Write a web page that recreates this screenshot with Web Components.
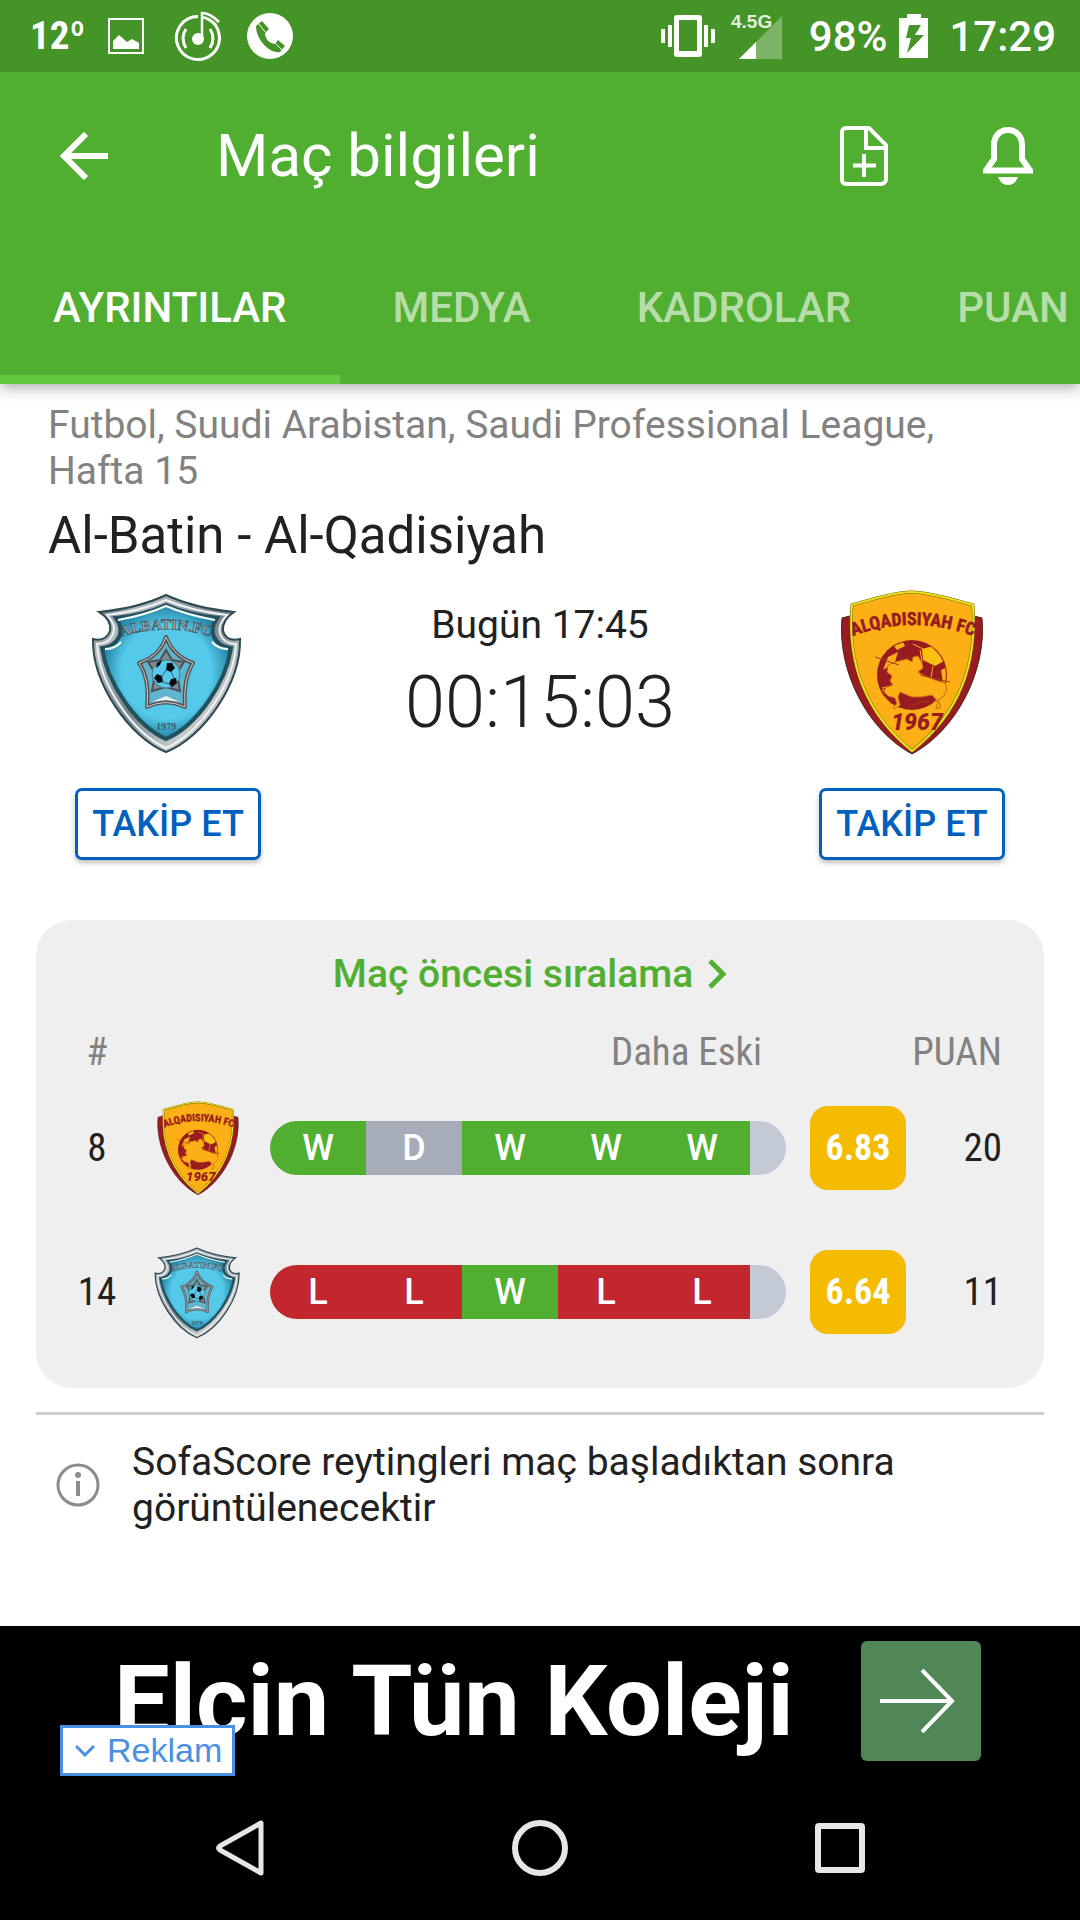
<!DOCTYPE html>
<html lang="tr">
<head>
<meta charset="utf-8">
<meta name="viewport" content="width=device-width, initial-scale=1">
<title>Maç bilgileri</title>
<style>
    body {
        margin: 0;
        background-color: white;
        color: #212121;
        font-family: Roboto, "Noto Sans", sans-serif;
        --green: #50ae30;
        --grey: #828282;
        --condensed: "Roboto Condensed", Roboto, sans-serif;
    }
</style>
</head>
<body>
<match-page>
    <status-bar slot="top" temperature="12º" battery="98%" clock="17:29"></status-bar>
    <app-toolbar slot="top">Maç bilgileri</app-toolbar>
    <tab-bar slot="top" tabs="AYRINTILAR,MEDYA,KADROLAR,PUAN"></tab-bar>

    <match-header>
        <span slot="league">Futbol, Suudi Arabistan, Saudi Professional League, Hafta 15</span>
        <span slot="name">Al-Batin - Al-Qadisiyah</span>
        <team-crest slot="home" team="batin"></team-crest>
        <follow-button slot="home">TAKİP ET</follow-button>
        <span slot="date">Bugün 17:45</span>
        <span slot="countdown">00:15:03</span>
        <team-crest slot="away" team="qadisiyah"></team-crest>
        <follow-button slot="away">TAKİP ET</follow-button>
    </match-header>
    <standings-card>Maç öncesi sıralama</standings-card>
    <info-note>SofaScore reytingleri maç başladıktan sonra görüntülenecektir</info-note>

    <ad-banner slot="bottom">Elçin Tün Koleji</ad-banner>
    <nav-bar slot="bottom"></nav-bar>
</match-page>

<script>
const ICONS = {
    image: `<svg viewBox="0 0 48 48" width="48" height="48">
        <rect x="7" y="7" width="34" height="34" fill="none" stroke="currentColor" stroke-width="2"/>
        <path d="M11 29l6-6 8 7 5-3 7 4v6H11z" fill="currentColor"/></svg>`,
    music: `<svg viewBox="0 0 48 52" width="48" height="52" fill="none" stroke="currentColor" stroke-width="3">
        <path d="M24 6.500A21.500 21.500 0 1 0 34 9"/>
        <path d="M28 28V3c5 0 12 4 17 9M28 7c5 1 10 4 14 8" stroke-width="2.500"/>
        <circle cx="24" cy="29" r="6" fill="currentColor" stroke="none"/>
        <path d="M12 19q-6 9 0 19M36 19q6 9 0 19"/></svg>`,
    phone: `<svg viewBox="0 0 48 48" width="48" height="48">
        <circle cx="24" cy="24" r="23" fill="currentColor"/>
        <path d="M16 9l7 8-4 4c0 6 4 10 10 11l3-4 7 6-5 6C24 42 10 28 10 14z" fill="#459428"/>
        <path d="M13 12l6 8M29 31l7 7" stroke="white" stroke-width="1"/></svg>`,
    vibrate: `<svg viewBox="0 0 54 44" width="54" height="44" fill="currentColor">
        <path fill-rule="evenodd" d="M16 1h22a3 3 0 0 1 3 3v36a3 3 0 0 1-3 3H16a3 3 0 0 1-3-3V4a3 3 0 0 1 3-3zM18 6v31h18V6z"/>
        <path d="M0 15h4v14H0zM7 11h4v22H7zM43 11h4v22h-4zM50 15h4v14h-4z"/></svg>`,
    signal: `<svg viewBox="0 0 54 48" width="54" height="48" overflow="visible">
        <path d="M4 47h43V4z" fill="white" fill-opacity=".3"/>
        <path d="M4 47h17V30z" fill="white"/>
        <text x="-4" y="16" fill="#e3f0df" font-family="Liberation Sans, sans-serif" font-weight="bold" font-size="19">4.5G</text></svg>`,
    battery: `<svg viewBox="0 0 30 44" width="30" height="44">
        <path fill-rule="evenodd" fill="currentColor" d="M8 0h14v4h7v40H0V4h8zM10 11L7 24h5L8 39l17-18h-9l6-10z"/></svg>`,
    back: `<svg viewBox="0 0 48 48" width="48" height="48" fill="none" stroke="currentColor" stroke-width="6">
        <path d="M26 2L4 24l22 22M4 24h44"/></svg>`,
    addFile: `<svg viewBox="0 0 48 60" width="48" height="60" fill="none" stroke="currentColor" stroke-width="4">
        <path d="M6 2h23l17 17v34a5 5 0 0 1-5 5H6a4 4 0 0 1-4-4V6a4 4 0 0 1 4-4z"/>
        <path d="M26 2v20h20M24 28v23M13 39.500h23"/></svg>`,
    bell: `<svg viewBox="0 0 50 58" width="50" height="58">
        <path d="M25 3c-8 0-14 6-14 15v14L3 43.500h44L39 32V18c0-9-6-15-14-15z" fill="none" stroke="currentColor" stroke-width="6"/>
        <path d="M15 50h20c-2 5-5 8-10 8s-8-3-10-8z" fill="currentColor"/></svg>`,
    chevron: `<svg viewBox="0 0 54 48" width="54" height="48" fill="none" stroke="currentColor" stroke-width="5">
        <path d="M17 11l13 13-13 13"/></svg>`,
    info: `<svg viewBox="0 0 48 48" width="48" height="48">
        <circle cx="24" cy="24" r="20" fill="none" stroke="#8c8c8c" stroke-width="3"/>
        <path d="M22 20h4v15h-4z" fill="#8c8c8c"/><circle cx="24" cy="14" r="3" fill="#8c8c8c"/></svg>`,
    arrow: `<svg viewBox="0 0 82 64" width="82" height="64" fill="none" stroke="white" stroke-width="4">
        <path d="M0 32h72M42 1l30 31-30 31"/></svg>`,
    down: `<svg viewBox="0 0 20 12" width="20" height="12" fill="none" stroke="currentColor" stroke-width="3">
        <path d="M1 1l9 9 9-9"/></svg>`,
    navBack: `<svg viewBox="0 0 56 56" width="56" height="56">
        <path d="M49 3v50L8 30q-3-2 0-4z" fill="none" stroke="#e6e6e6" stroke-width="5" stroke-linejoin="round"/></svg>`,
    navHome: `<svg viewBox="0 0 56 56" width="56" height="56">
        <circle cx="28" cy="28" r="25" fill="none" stroke="#e6e6e6" stroke-width="6"/></svg>`,
    navRecent: `<svg viewBox="0 0 56 56" width="56" height="56">
        <rect x="6" y="6" width="44" height="44" rx="1" fill="none" stroke="#e6e6e6" stroke-width="6"/></svg>`
};

const CRESTS = {
    batin: `<svg viewBox="0 0 168 168" role="img" aria-label="Al-Batin">
        <defs>
            <linearGradient id="steel" x1="0" y1="0" x2="1" y2="1">
                <stop offset="0" stop-color="#4f5f66"/><stop offset=".2" stop-color="#b4babd"/>
                <stop offset=".5" stop-color="#76858b"/><stop offset=".75" stop-color="#c6caca"/>
                <stop offset="1" stop-color="#575f63"/>
            </linearGradient>
            <radialGradient id="sky"><stop offset=".7" stop-color="#55c9ea"/><stop offset="1" stop-color="#2585a5"/></radialGradient>
            <path id="arc" d="M36 49Q82 34 128 49"/>
        </defs>
        <path d="M82 7Q55 20 15 24Q28 32 26 43Q22 54 9 51C8 95 45 149 82 164C120 149 157 95 156 51Q142 54 139 43Q138 32 150 24Q110 20 82 7z" fill="url(#steel)" stroke="#2c4953" stroke-width="2"/>
        <path d="M82 12Q58 23 23 27Q33 37 29 46Q25 56 13 56C15 96 49 145 82 160C116 145 150 96 152 56Q140 56 136 46Q133 37 143 27Q107 23 82 12z" fill="none" stroke="#eef2f3" stroke-width="2"/>
        <path d="M82 17Q60 27 32 30Q39 40 35 49Q30 59 18 60C23 94 51 137 82 151C114 137 142 94 147 60Q135 59 130 49Q126 40 133 30Q105 27 82 17z" fill="url(#sky)" stroke="#21515f" stroke-width="4"/>
        <path d="M34 32Q62 27 82 18Q103 27 131 32M21 61Q31 61 37 54M144 61Q134 61 128 54" fill="none" stroke="#f7ffff" stroke-width="2"/>
        <text fill="#a3acae" stroke="#3e555e" stroke-width=".7" font-family="Liberation Serif, serif" font-weight="bold" font-size="15"><textPath href="#arc" startOffset="50%" text-anchor="middle">ALBATIN.FC</textPath></text>
        <path d="M82 49Q89 68 109 75Q99 91 101 119Q82 110 63 119Q66 91 55 75Q76 68 82 49z" fill="#5fb4ce" stroke="#565456" stroke-width="4" stroke-linejoin="round"/>
        <path d="M82 49Q89 68 109 75Q99 91 101 119Q82 110 63 119Q66 91 55 75Q76 68 82 49z" fill="none" stroke="#c8cccc" stroke-width="1"/>
        <path d="M82 62l6 10 12 2-7 11 3 18-14-4-14 4 3-18-7-11 12-2z" fill="#7d8a8f" stroke="#4b5154" stroke-width="2"/>
        <path d="M68 114l14-6 14 6-14-2z" fill="#eceeee"/>
        <circle cx="82" cy="86" r="14" fill="#58c9e8" stroke="#4e7784" stroke-width="1"/>
        <path d="M83 75l5 0 3 5-4 4-5-2zM73 86l5 2 1 6-5 1-4-5zM87 91l5-1 1 5-5 4-3-3zM73 75l5-3-2 5-4 3z" fill="#060b0e"/>
        <path d="M82 82l-4 6M87 84l3 6M79 94l6 2" stroke="#33616f" stroke-width="1"/>
        <text x="82" y="142" text-anchor="middle" fill="#3c5b66" font-family="Liberation Serif, serif" font-weight="bold" font-size="10">1979</text></svg>`,
    qadisiyah: `<svg viewBox="0 0 168 168" role="img" aria-label="Al-Qadisiyah">
        <defs><path id="arc" d="M25 48Q84 26 145 48"/><clipPath id="ball"><circle cx="84" cy="87" r="34"/></clipPath></defs>
        <path d="M14 30L26 27H142L154 30C159 82 129 142 84 166C39 142 9 82 14 30z" fill="#971b1f" stroke="#4f2326" stroke-width="1"/>
        <path d="M24 17Q68 4 83 4Q100 4 145 17C149 75 133 124 84 163C36 124 19 75 24 17z" fill="#fdb016" stroke="#6e6412" stroke-width="3"/>
        <path d="M24 17Q68 4 83 4Q100 4 145 17C149 75 133 124 84 163C36 124 19 75 24 17z" fill="none" stroke="#f1e21b" stroke-width="2"/>
        <text fill="#971b1f" stroke="#971b1f" stroke-width=".5" font-family="Roboto Condensed, Roboto, sans-serif" font-weight="bold" font-size="18"><textPath href="#arc" startOffset="50%" text-anchor="middle">ALQADISIYAH FC</textPath></text>
        <circle cx="84" cy="87" r="35" fill="#971b1f"/>
        <g clip-path="url(#ball)">
            <path d="M94 61l11-3 8 6 3 9-9 5-12-6z" fill="#fec00f"/>
            <path d="M60 69l10-5-3 10-12 8zM66 58l9-4 2 4-8 4zM113 82l8-4v14l-6 4z" fill="#fdb016"/>
            <path d="M85 56l10 5M105 78l-2 12M92 62l2 12M54 100l10-2" stroke="#fdb016" stroke-width="1"/>
        </g>
        <path d="M60 77l7-3 8-2 4-1 5 3 1-5 5-1 4 7 1 5-5 4 5 3 12 5 10 3 2 7-4 7-5 3 3 7-5 2 2-7-6-7-11 2h-9l-5-2-7-3-2 5 2 8-5 4-2-2 4-3-2-6-7-2-6-6 5-3 6-2-3-4 2-5-5-4z" fill="#fdb016" stroke="#c96b17" stroke-width="1"/>
        <path d="M47 69l24 8M92 87l30 7M57 100l-2 6 9 10M84 118l10-5 8 1" fill="none" stroke="#a63a1b" stroke-width="1"/>
        <text x="89" y="142" text-anchor="middle" fill="#971b1f" font-family="Roboto, sans-serif" font-style="italic" font-weight="900" font-size="23">1967</text></svg>`
};

class MatchPage extends HTMLElement {
    constructor() {
        super();
        this.attachShadow({mode: "open"}).innerHTML = `
        <style>
        :host {
            display: flex;
            flex-direction: column;
            min-height: 100vh;
        }
        header {
            background-color: var(--green);
            box-shadow: 0 3px 14px rgba(0, 0, 0, .35);
        }
        main {
            flex: 1;
        }
        footer {
            background-color: black;
        }
        </style>
        <header><slot name="top"></slot></header>
        <main><slot></slot></main>
        <footer><slot name="bottom"></slot></footer>
        `;
    }
}
customElements.define("match-page", MatchPage);

class AppIcon extends HTMLElement {
    constructor() {
        super();
        this.attachShadow({mode: "open"});
    }

    connectedCallback() {
        this.shadowRoot.innerHTML = `
        <style>
        :host { display: inline-flex; flex: none; }
        svg { display: block; }
        </style>
        ${ICONS[this.getAttribute("name")]}
        `;
    }
}
customElements.define("app-icon", AppIcon);

class TeamCrest extends HTMLElement {
    constructor() {
        super();
        this.attachShadow({mode: "open"});
    }

    connectedCallback() {
        this.shadowRoot.innerHTML = `
        <style>
        :host { display: block; width: var(--crest-size, 168px); }
        svg { display: block; width: 100%; }
        </style>
        ${CRESTS[this.getAttribute("team")]}
        `;
    }
}
customElements.define("team-crest", TeamCrest);

class StatusBar extends HTMLElement {
    constructor() {
        super();
        this.attachShadow({mode: "open"});
    }

    connectedCallback() {
        this.shadowRoot.innerHTML = `
        <style>
        :host {
            display: flex;
            justify-content: space-between;
            height: 72px;
            padding: 0 24px 0 30px;
            background-color: #459428;
            color: white;
            font-size: 42px;
            font-weight: 500;
        }
        div {
            display: flex;
            align-items: center;
            gap: 24px;
        }
        .system {
            gap: 20px;
        }
        .battery {
            gap: 12px;
        }
        .temperature {
            width: 48px;
            font-family: var(--condensed);
            font-weight: bold;
            font-size: 39px;
        }
        </style>
        <div>
            <span class="temperature">${this.getAttribute("temperature")}</span>
            <app-icon name="image"></app-icon>
            <app-icon name="music"></app-icon>
            <app-icon name="phone"></app-icon>
        </div>
        <div class="system">
            <app-icon name="vibrate"></app-icon>
            <app-icon name="signal"></app-icon>
            <div class="battery">
                <span>${this.getAttribute("battery")}</span>
                <app-icon name="battery"></app-icon>
            </div>
            <span>${this.getAttribute("clock")}</span>
        </div>
        `;
    }
}
customElements.define("status-bar", StatusBar);

class AppToolbar extends HTMLElement {
    constructor() {
        super();
        this.attachShadow({mode: "open"}).innerHTML = `
        <style>
        :host {
            display: flex;
            align-items: center;
            height: 168px;
            color: white;
        }
        h1 {
            flex: 1;
            margin: 0 0 0 48px;
            font-size: 60px;
            font-weight: normal;
            line-height: 70px;
        }
        button {
            display: flex;
            align-items: center;
            justify-content: center;
            width: 144px;
            height: 144px;
            padding: 0;
            border: 0;
            background: none;
            color: inherit;
            cursor: pointer;
        }
        .back {
            width: 168px;
        }
        </style>
        <button class="back" aria-label="Geri"><app-icon name="back"></app-icon></button>
        <h1><slot></slot></h1>
        <button aria-label="Ekle"><app-icon name="addFile"></app-icon></button>
        <button aria-label="Bildirimler"><app-icon name="bell"></app-icon></button>
        `;
    }
}
customElements.define("app-toolbar", AppToolbar);

class TabBar extends HTMLElement {
    constructor() {
        super();
        this.attachShadow({mode: "open"});
    }

    connectedCallback() {
        const tabs = this.getAttribute("tabs").split(",");
        this.shadowRoot.innerHTML = `
        <style>
        :host {
            display: block;
        }
        nav {
            display: flex;
            overflow: hidden;
        }
        button {
            flex: none;
            height: 144px;
            padding: 0 53px;
            border: 0;
            border-bottom: 9px solid transparent;
            background: none;
            color: rgba(255, 255, 255, .6);
            font: 500 42px Roboto, sans-serif;
            cursor: pointer;
        }
        button[aria-selected="true"] {
            border-bottom-color: #63ca3f;
            color: white;
        }
        </style>
        <nav role="tablist">
            ${tabs.map((tab, i) => `<button role="tab" aria-selected="${i === 0}">${tab}</button>`).join("")}
        </nav>
        `;
        this.shadowRoot.querySelectorAll("button").forEach(button => {
            button.addEventListener("click", () => this.select(button));
        });
    }

    select(selected) {
        this.shadowRoot.querySelectorAll("button").forEach(button => {
            button.setAttribute("aria-selected", button === selected);
        });
    }
}
customElements.define("tab-bar", TabBar);

class FollowButton extends HTMLElement {
    constructor() {
        super();
        this.attachShadow({mode: "open"}).innerHTML = `
        <style>
        :host {
            display: block;
        }
        button {
            height: 72px;
            padding: 0 14px;
            border: 3px solid #0060bd;
            border-radius: 7px;
            box-shadow: 0 3px 5px rgba(0, 0, 0, .25);
            background-color: white;
            color: #0060bd;
            font: 500 36px Roboto, sans-serif;
            cursor: pointer;
        }
        </style>
        <button><slot></slot></button>
        `;
    }
}
customElements.define("follow-button", FollowButton);

class MatchHeader extends HTMLElement {
    constructor() {
        super();
        this.attachShadow({mode: "open"}).innerHTML = `
        <style>
        :host {
            display: block;
            padding: 18px 48px 60px;
        }
        p, h2 {
            margin: 0;
        }
        .league {
            color: var(--grey);
            font-size: 39px;
            line-height: 46px;
        }
        h2 {
            margin-top: 12px;
            font-size: 51px;
            font-weight: normal;
            line-height: 60px;
        }
        .teams {
            display: flex;
            justify-content: space-between;
            margin-top: 22px;
        }
        .team {
            display: flex;
            flex-direction: column;
            align-items: center;
            gap: 32px;
            width: 240px;
        }
        .time {
            display: flex;
            flex-direction: column;
            gap: 12px;
            padding-top: 14px;
            text-align: center;
        }
        .date {
            font-size: 39px;
            line-height: 46px;
        }
        .countdown {
            font-size: 72px;
            font-weight: 300;
            line-height: 86px;
        }
        </style>
        <p class="league"><slot name="league"></slot></p>
        <h2><slot name="name"></slot></h2>
        <div class="teams">
            <div class="team"><slot name="home"></slot></div>
            <div class="time">
                <p class="date"><slot name="date"></slot></p>
                <p class="countdown"><slot name="countdown"></slot></p>
            </div>
            <div class="team"><slot name="away"></slot></div>
        </div>
        `;
    }
}
customElements.define("match-header", MatchHeader);

class FormStrip extends HTMLElement {
    constructor() {
        super();
        this.attachShadow({mode: "open"});
    }

    connectedCallback() {
        this.shadowRoot.innerHTML = `
        <style>
        :host {
            display: flex;
            height: 54px;
            overflow: hidden;
            border-radius: 27px;
            color: white;
            font-family: Roboto, sans-serif;
            font-size: 36px;
            font-weight: 500;
            line-height: 54px;
            text-align: center;
        }
        span { flex: 8 1 0; }
        .W { background-color: var(--green); }
        .D { background-color: #a6adb8; }
        .L { background-color: #c1272d; }
        .older { flex: 3 1 0; background-color: #c4cad5; }
        </style>
        ${[...this.getAttribute("results")].map(result => `<span class="${result}">${result}</span>`).join("")}
        <span class="older"></span>
        `;
    }
}
customElements.define("form-strip", FormStrip);

class StandingsCard extends HTMLElement {
    constructor() {
        super();
        this.attachShadow({mode: "open"});
        this.rows = [
            {position: 8, team: "qadisiyah", results: "WDWWW", rating: "6.83", points: 20},
            {position: 14, team: "batin", results: "LLWLL", rating: "6.64", points: 11}
        ];
    }

    connectedCallback() {
        this.render();
    }

    render() {
        this.shadowRoot.innerHTML = `
        <style>
        :host {
            display: block;
            margin: 0 36px;
            padding-bottom: 24px;
            border-radius: 36px;
            background-color: #efefef;
        }
        a {
            display: flex;
            align-items: center;
            justify-content: center;
            height: 108px;
            color: var(--green);
            font-size: 39px;
            font-weight: 500;
            text-decoration: none;
        }
        table {
            width: 100%;
            border-collapse: collapse;
            table-layout: fixed;
            font-family: var(--condensed);
            font-size: 39px;
        }
        th, td {
            padding: 0;
            text-align: center;
        }
        th {
            height: 48px;
            color: var(--grey);
            font-weight: normal;
            line-height: 48px;
        }
        td {
            height: 144px;
        }
        .position { width: 98px; padding-left: 12px; }
        .crest { width: 104px; }
        .form { padding: 0 24px 0 20px; }
        .rating { width: 96px; }
        .points { width: 96px; padding-right: 42px; text-align: right; }
        th.form { padding-right: 48px; text-align: right; }
        team-crest {
            --crest-size: 96px;
            margin: 0 auto;
        }
        b {
            display: block;
            border-radius: 18px;
            background-color: #f4bb00;
            color: white;
            font-size: 36px;
            line-height: 84px;
        }
        </style>
        <a href="#siralama"><slot></slot><app-icon name="chevron"></app-icon></a>
        <table>
            <thead>
                <tr>
                    <th class="position">#</th>
                    <th class="crest"></th>
                    <th class="form">Daha Eski</th>
                    <th class="rating"></th>
                    <th class="points">PUAN</th>
                </tr>
            </thead>
            <tbody>
                ${this.rows.map(row => `
                <tr>
                    <td class="position">${row.position}</td>
                    <td class="crest"><team-crest team="${row.team}"></team-crest></td>
                    <td class="form"><form-strip results="${row.results}"></form-strip></td>
                    <td class="rating"><b>${row.rating}</b></td>
                    <td class="points">${row.points}</td>
                </tr>`).join("")}
            </tbody>
        </table>
        `;
    }
}
customElements.define("standings-card", StandingsCard);

class InfoNote extends HTMLElement {
    constructor() {
        super();
        this.attachShadow({mode: "open"}).innerHTML = `
        <style>
        :host {
            display: flex;
            align-items: center;
            gap: 30px;
            margin: 24px 36px 0;
            padding: 24px 18px;
            border-top: 3px solid #cecece;
            font-size: 39px;
            line-height: 46px;
        }
        </style>
        <app-icon name="info"></app-icon>
        <span><slot></slot></span>
        `;
    }
}
customElements.define("info-note", InfoNote);

class AdBanner extends HTMLElement {
    constructor() {
        super();
        this.attachShadow({mode: "open"}).innerHTML = `
        <style>
        :host {
            display: flex;
            position: relative;
            align-items: center;
            justify-content: space-between;
            height: 150px;
            padding: 0 99px 0 114px;
            color: white;
            font-size: 99px;
            font-weight: bold;
            line-height: 116px;
            white-space: nowrap;
        }
        .open {
            display: flex;
            align-items: center;
            justify-content: center;
            width: 120px;
            height: 120px;
            border-radius: 6px;
            background-color: #518657;
        }
        .label {
            display: flex;
            position: absolute;
            bottom: 0;
            left: 60px;
            align-items: center;
            gap: 12px;
            height: 51px;
            box-sizing: border-box;
            padding: 0 10px 0 12px;
            border: 3px solid #4a90e2;
            background-color: white;
            color: #4a90e2;
            font: 34px "Liberation Sans", sans-serif;
        }
        </style>
        <span><slot></slot></span>
        <a class="open" href="#reklam" aria-label="Siteyi aç"><app-icon name="arrow"></app-icon></a>
        <button class="label"><app-icon name="down"></app-icon>Reklam</button>
        `;
    }
}
customElements.define("ad-banner", AdBanner);

class NavBar extends HTMLElement {
    constructor() {
        super();
        this.attachShadow({mode: "open"}).innerHTML = `
        <style>
        :host {
            display: flex;
            height: 144px;
            padding: 0 90px;
        }
        button {
            display: flex;
            flex: 1;
            align-items: center;
            justify-content: center;
            padding: 0;
            border: 0;
            background: none;
            cursor: pointer;
        }
        </style>
        <button aria-label="Geri"><app-icon name="navBack"></app-icon></button>
        <button aria-label="Ana ekran"><app-icon name="navHome"></app-icon></button>
        <button aria-label="Son uygulamalar"><app-icon name="navRecent"></app-icon></button>
        `;
    }
}
customElements.define("nav-bar", NavBar);
</script>
</body>
</html>
